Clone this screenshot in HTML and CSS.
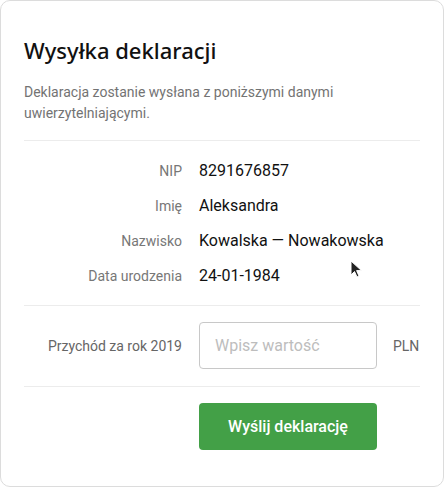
FILE: index.html
```html
<!DOCTYPE html>
<html lang="pl">
<head>
    <meta charset="UTF-8">
    <title>Wysyłka deklaracji</title>
    <link rel="stylesheet" href="styles.css">
</head>
<body>
    <div class="card">
        <h1>Wysyłka deklaracji</h1>
        <p class="lead">Deklaracja zostanie wysłana z poniższymi danymi uwierzytelniającymi.</p>

        <div class="section details">
            <div class="row">
                <span class="label">NIP</span>
                <span class="value">8291676857</span>
            </div>
            <div class="row">
                <span class="label">Imię</span>
                <span class="value">Aleksandra</span>
            </div>
            <div class="row">
                <span class="label">Nazwisko</span>
                <span class="value">Kowalska — Nowakowska</span>
            </div>
            <div class="row">
                <span class="label">Data urodzenia</span>
                <span class="value">24-01-1984</span>
            </div>
        </div>

        <div class="section income">
            <label class="label" for="income">Przychód za rok 2019</label>
            <input type="text" id="income" placeholder="Wpisz wartość">
            <span class="unit">PLN</span>
        </div>

        <div class="section actions">
            <button type="button">Wyślij deklarację</button>
        </div>

        <!-- mouse pointer from the screenshot -->
        <svg class="cursor" width="14" height="18" viewBox="0 0 14 18">
            <path d="M1 1 L1 15 L4.5 11.5 L7 17 L9 16 L6.6 10.6 L11.5 10.6 Z" fill="#222" stroke="#fff" stroke-width="1"/>
        </svg>
    </div>
</body>
</html>
```

FILE: styles.css
```css
/* Page */
body {
    margin: 0;
    background: #fff;
    font-family: Roboto, Arial, sans-serif;
}

/* Card */
.card {
    position: relative;
    box-sizing: border-box;
    width: 444px;
    height: 487px;
    padding: 0 23px;
    border: 1px solid #dcdcdc;
    border-radius: 10px;
    background: #fff;
}

h1 {
    margin: 0;
    padding-top: 34px;
    font-family: "Noto Sans", sans-serif;
    font-size: 22px;
    font-weight: 500;
    line-height: 30px;
    color: #111;
}

.lead {
    margin: 17px 0 0 0;
    padding-bottom: 16px;
    font-size: 14px;
    line-height: 21px;
    color: #737373;
    max-width: 360px;
}

.section {
    border-top: 1px solid #ececec;
}

/* Personal data */
.details {
    padding: 12px 0 12px 0;
}
.row {
    display: flex;
    align-items: baseline;
    height: 35px;
    line-height: 35px;
}
.label {
    width: 158px;
    text-align: right;
    margin-right: 17px;
    font-size: 14px;
    color: #777;
}
.value {
    font-size: 16px;
    color: #111;
}

/* Income */
.income {
    display: flex;
    align-items: center;
    padding: 16px 0 17px 0;
}
.income .label {
    color: #666;
}
.income input {
    box-sizing: border-box;
    width: 178px;
    height: 47px;
    padding: 0 15px;
    border: 1px solid #c8c8c8;
    border-radius: 4px;
    font-family: Roboto, Arial, sans-serif;
    font-size: 16px;
    color: #111;
}
.income input::placeholder {
    color: #bdbdbd;
}
.unit {
    margin-left: 16px;
    font-size: 14px;
    color: #666;
}

/* Submit */
.actions {
    padding: 16px 0 0 175px;
}
button {
    width: 178px;
    height: 47px;
    border: none;
    border-radius: 4px;
    background-color: #43a047;
    color: #fff;
    font-family: Roboto, Arial, sans-serif;
    font-size: 16px;
    font-weight: 500;
    cursor: pointer;
}

.cursor {
    position: absolute;
    left: 349px;
    top: 259px;
}
```
